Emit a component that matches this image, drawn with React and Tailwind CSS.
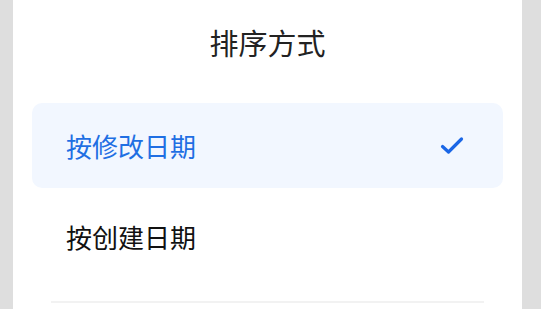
import React from 'react';

const options = [
  { key: 'modified', label: '按修改日期' },
  { key: 'created', label: '按创建日期' },
];

export default function App() {
  const selected = 'modified';

  return (
    <div
      className="w-[541px] h-[309px] bg-[#dedede] overflow-hidden"
      style={{ fontFamily: '"Noto Sans CJK SC", "Noto Sans", sans-serif' }}
    >
      <div className="ml-[13px] w-[509px] h-full bg-white flex flex-col">
        <h2 className="mt-[21px] text-center text-[29px] leading-[42px] text-[#222222]">排序方式</h2>

        <div className="mt-[40px] px-[19px] flex flex-col gap-[6px]">
          {options.map((o) => {
            const active = o.key === selected;
            return (
              <div
                key={o.key}
                className={
                  active
                    ? 'h-[85px] rounded-[10px] bg-[#f2f7ff] pl-[34px] pr-[39px] flex items-center justify-between'
                    : 'h-[85px] rounded-[10px] pl-[34px] pr-[39px] flex items-center justify-between'
                }
              >
                <span className={active ? 'text-[26px] text-[#1f6fe3]' : 'text-[26px] text-[#111111]'}>
                  {o.label}
                </span>
                {active && (
                  <svg width="24" height="20" viewBox="0 0 24 20" fill="none">
                    <path
                      d="M2.5 10.5 L8.5 16 L21.5 3"
                      stroke="#1a66e6"
                      strokeWidth="3.2"
                      strokeLinecap="round"
                      strokeLinejoin="round"
                    />
                  </svg>
                )}
              </div>
            );
          })}
        </div>

        <div className="mt-[22px] mx-[38px] h-[2px] bg-[#f2f2f2]" />
      </div>
    </div>
  );
}
